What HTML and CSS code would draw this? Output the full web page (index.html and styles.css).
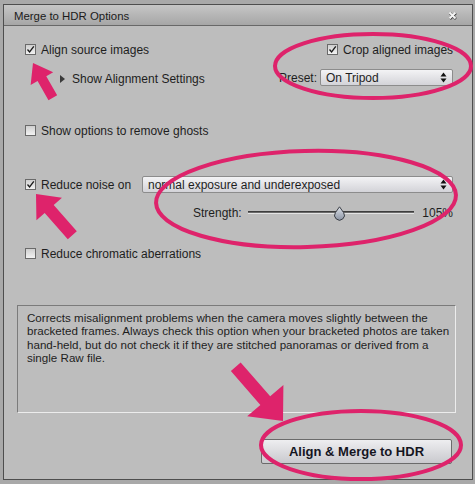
FILE: index.html
```html
<!DOCTYPE html>
<html>
<head>
<meta charset="utf-8">
<link rel="stylesheet" href="styles.css">
</head>
<body>
<div class="window">
  <div class="titlebar">
    <span class="title">Merge to HDR Options</span>
    <svg class="close" width="9" height="9" viewBox="0 0 9 9"><path d="M1.5 1.5 L7.5 7.5 M7.5 1.5 L1.5 7.5" stroke="#3a3a3a" stroke-width="2.6" transform="translate(0.4,0.5)"/><path d="M1.5 1.5 L7.5 7.5 M7.5 1.5 L1.5 7.5" stroke="#f4f4f4" stroke-width="2"/></svg>
  </div>
  <div class="content">
    <div class="row r1">
      <label class="opt"><span class="cb"><svg viewBox="0 0 9 9"><path d="M1.5 4.5 L3.6 7 L7.8 1.3" fill="none" stroke="#1a1a1a" stroke-width="1.3"/></svg></span>Align source images</label>
      <label class="opt crop"><span class="cb"><svg viewBox="0 0 9 9"><path d="M1.5 4.5 L3.6 7 L7.8 1.3" fill="none" stroke="#1a1a1a" stroke-width="1.3"/></svg></span>Crop aligned images</label>
    </div>
    <div class="row r2">
      <div class="disclosure"><span class="tri"></span>Show Alignment Settings</div>
      <div class="preset"><span class="preset-label">Preset:</span><div class="select preset-select">On Tripod<svg class="updown" width="7" height="11" viewBox="0 0 7 11"><path d="M3.5 0.5 L6.5 4.5 L0.5 4.5 Z M3.5 10.5 L6.5 6.5 L0.5 6.5 Z" fill="#111"/></svg></div></div>
    </div>
    <div class="row r3">
      <label class="opt"><span class="cb"></span>Show options to remove ghosts</label>
    </div>
    <div class="row r4">
      <label class="opt"><span class="cb"><svg viewBox="0 0 9 9"><path d="M1.5 4.5 L3.6 7 L7.8 1.3" fill="none" stroke="#1a1a1a" stroke-width="1.3"/></svg></span>Reduce noise on</label>
      <div class="select noise-select">normal exposure and underexposed<svg class="updown" width="7" height="11" viewBox="0 0 7 11"><path d="M3.5 0.5 L6.5 4.5 L0.5 4.5 Z M3.5 10.5 L6.5 6.5 L0.5 6.5 Z" fill="#111"/></svg></div>
    </div>
    <div class="row r5">
      <span class="strength-label">Strength:</span>
      <div class="slider">
        <div class="track"></div>
        <svg class="thumb" width="13" height="16" viewBox="0 0 13 16">
          <defs><linearGradient id="tg" x1="0" y1="0" x2="0" y2="1"><stop offset="0" stop-color="#dfe3ea"/><stop offset="1" stop-color="#8a93a3"/></linearGradient></defs>
          <path d="M6.5 0.8 L10.6 6.6 A4.9 4.9 0 1 1 2.4 6.6 Z" fill="url(#tg)" stroke="#3b3f46" stroke-width="1"/>
        </svg>
      </div>
      <span class="pct">105%</span>
    </div>
    <div class="row r6">
      <label class="opt"><span class="cb"></span>Reduce chromatic aberrations</label>
    </div>
    <div class="desc">Corrects misalignment problems when the camera moves slightly between the<br>bracketed frames. Always check this option when your bracketed photos are taken<br>hand-held, but do not check it if they are stitched panoramas or derived from a<br>single Raw file.</div>
    <div class="actions"><button class="btn">Align &amp; Merge to HDR</button></div>
  </div>
</div>
<svg class="annot" width="475" height="484" viewBox="0 0 475 484">
  <g fill="none" stroke="#de236b" stroke-width="4">
    <ellipse cx="373" cy="66" rx="98" ry="32"/>
    <ellipse cx="306" cy="199" rx="150" ry="48" transform="rotate(-1.5 306 199)"/>
    <ellipse cx="361" cy="445" rx="100" ry="34"/>
  </g>
  <g fill="#de236b">
    <polygon points="0,0 18,-13 18,-5 40,-5 40,5 18,5 18,13" transform="translate(33,63) rotate(60.3)"/>
    <polygon points="0,0 20,-17 20,-6 55,-6 55,6 20,6 20,17" transform="translate(36,194) rotate(48.7)"/>
    <polygon points="0,0 27,-24 27,-6.5 72,-6.5 72,6.5 27,6.5 27,24" transform="translate(283,421) rotate(229)"/>
  </g>
</svg>
</body>
</html>
```
FILE: styles.css
```css
* { box-sizing: border-box; }
html, body { margin: 0; padding: 0; }
body {
  background: #a9a9a9;
  width: 475px;
  height: 484px;
  overflow: hidden;
  position: relative;
  font-family: "Liberation Sans", Arial, sans-serif;
  font-size: 12px;
  color: #1e1e1e;
}
.window {
  margin: 4px 0 0 3px;
  width: 470px;
  height: 476px;
  border: 1px solid #4e4e4e;
  background: #bdbdbd;
  display: flex;
  flex-direction: column;
}
.titlebar {
  height: 21px;
  border-bottom: 1px solid #686868;
  background: linear-gradient(#c6c6c6, #a6a6a6);
  display: flex;
  align-items: center;
  justify-content: space-between;
  padding: 0 15px 0 10px;
}
.title { font-size: 11.4px; color: #1b1b1b; padding-top: 1px; }
.close { display: block; }
.content {
  padding: 15px 19px 0 21px;
  display: flex;
  flex-direction: column;
}
.row {
  height: 17px;
  display: flex;
  align-items: center;
}
.r1 { margin-top: 0; justify-content: space-between; }
.r2 { margin-top: 11px; justify-content: space-between; }
.r3 { margin-top: 36px; }
.r4 { margin-top: 37px; justify-content: space-between; }
.r5 { margin-top: 11px; }
.r6 { margin-top: 24px; }
.opt { display: flex; align-items: center; white-space: nowrap; }
.cb {
  width: 11px;
  height: 11px;
  border: 1px solid #6a6a6a;
  background: linear-gradient(#cfcfcf, #f2f2f2);
  margin-right: 5px;
  display: inline-flex;
  align-items: center;
  justify-content: center;
  flex: none;
}
.cb svg { width: 9px; height: 9px; display: block; }
.crop { width: 126px; }
.disclosure {
  display: flex;
  align-items: center;
  margin-left: 35px;
  padding-top: 3px;
}
.tri {
  width: 0; height: 0;
  border-top: 4px solid transparent;
  border-bottom: 4px solid transparent;
  border-left: 5px solid #3a3a3a;
  margin-right: 7px;
}
.preset { display: flex; align-items: center; }
.preset-label { margin-right: 3px; }
.select {
  height: 17px;
  border: 1px solid #8c8c8c;
  border-radius: 2px;
  background: linear-gradient(#f3f3f5, #d3d3d8);
  display: flex;
  align-items: center;
  justify-content: space-between;
  padding: 0 5px 0 5px;
  white-space: nowrap;
}
.updown { display: block; }
.preset-select { width: 133px; }
.noise-select { width: 311px; }
.strength-label { margin-left: 168px; width: 56px; }
.slider { width: 170px; height: 17px; position: relative; }
.track {
  position: absolute;
  left: 0; right: 0; top: 7px;
  height: 3px;
  border-top: 1px solid #3d3d3d;
  border-bottom: 1px solid #e4e4e4;
  background: #6a6a6a;
}
.thumb { position: absolute; left: 85px; top: 2px; }
.pct { margin-left: 8px; }
.desc {
  margin: 43px -3px 0 -8px;
  height: 108px;
  border-top: 1px solid #7b7b7b;
  border-left: 1px solid #7b7b7b;
  border-right: 1px solid #ececec;
  border-bottom: 1px solid #ececec;
  padding: 5px 4px 0 9px;
  font-size: 11.6px;
  line-height: 13.4px;
  white-space: nowrap;
}
.actions { margin-top: 26px; display: flex; justify-content: flex-end; padding-right: 1px; }
.btn {
  width: 191px;
  height: 25px;
  border: 1px solid #6b6b6b;
  border-radius: 2px;
  background: linear-gradient(#eeeef0, #c9c9ce);
  font-family: "Liberation Sans", Arial, sans-serif;
  font-weight: bold;
  font-size: 13px;
  color: #15151f;
  padding: 0;
}
.annot { position: absolute; left: 0; top: 0; pointer-events: none; }
```
